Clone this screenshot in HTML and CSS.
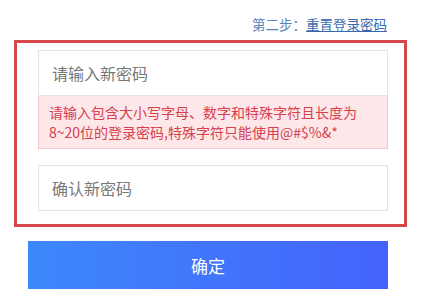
FILE: index.html
```html
<!DOCTYPE html>
<html>
	<head>
		<meta charset="utf-8">
		<title>重置登录密码</title>
		<link rel="stylesheet" href="styles.css">
	</head>
	<body>
		<div class="main">
			<div class="step">
				第二步：<span class="step-now">重置登录密码</span>
			</div>
			<div class="form-box">
				<input type="password" class="pwd-in" placeholder="请输入新密码">
				<div class="pwd-tip">
					请输入包含大小写字母、数字和特殊字符且长度为8~20位的登录密码,特殊字符只能使用@#$%&amp;*
				</div>
				<input type="password" class="pwd-in pwd-again" placeholder="确认新密码">
			</div>
			<button class="ok-btn">确定</button>
		</div>
	</body>
</html>
```

FILE: styles.css
```css
body{
	margin: 0;
	background: #fff;
	font-family: "Noto Sans CJK SC", "Microsoft YaHei", sans-serif;
}
.main{
	width: 421px;
	padding-top: 14px;
}
.step{
	height: 20px;
	line-height: 20px;
	font-size: 13.5px;
	color: #5b84b8;
	text-align: right;
	padding-right: 34px;
}
.step-now{
	color: #3769ad;
	text-decoration: underline;
}
.form-box{
	box-sizing: border-box;
	width: 393px;
	margin: 6px 0 0 14px;
	border: 3px solid #d6474c;
	padding: 7px 16px 13px 21px;
}
.pwd-in{
	display: block;
	box-sizing: border-box;
	width: 350px;
	height: 46px;
	border: 1px solid #e3e3e3;
	padding: 0 13px;
	font-size: 16px;
	font-family: inherit;
	color: #333;
	outline: none;
}
.pwd-in::placeholder{
	color: #777;
}
.pwd-tip{
	box-sizing: border-box;
	width: 350px;
	height: 53px;
	background: #fde7e9;
	border: 1px solid #f1c9cd;
	border-top: none;
	padding: 6px 8px 0 10px;
	font-size: 14px;
	line-height: 20px;
	color: #d8404e;
}
.pwd-again{
	margin-top: 16px;
}
.ok-btn{
	display: block;
	width: 360px;
	height: 48px;
	margin: 14px 0 0 28px;
	border: none;
	background: linear-gradient(to right, #3d88fc, #4563fb);
	color: #fff;
	font-size: 17px;
	font-family: inherit;
}
```
